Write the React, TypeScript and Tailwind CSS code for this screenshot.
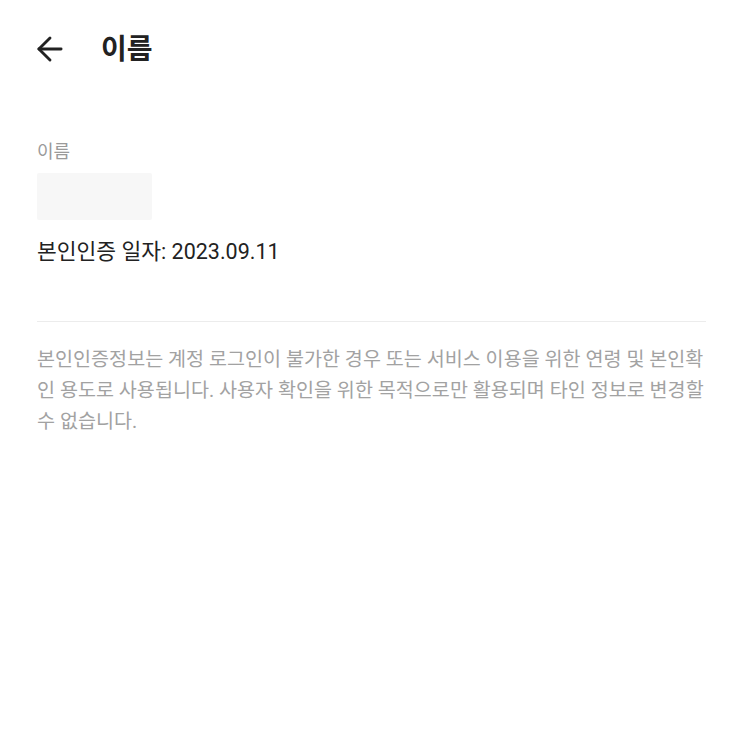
import { ArrowLeft } from 'lucide-react';

export default function App() {
  return (
    <div className="w-[743px] h-[747px] bg-white" style={{ fontFamily: '"Roboto", "Noto Sans CJK KR", sans-serif' }}>
      {/* Header */}
      <div className="flex items-center h-[100px] pl-[31px]">
        <ArrowLeft size={38} strokeWidth={1.8} className="text-[#222] mb-[2px]" />
        <h1 className="ml-[32px] text-[28px] font-bold text-[#222] leading-none">이름</h1>
      </div>

      {/* Name info */}
      <div className="px-[37px] pt-[40px]">
        <p className="text-[18px] text-[#9a9a9a] leading-[24px]">이름</p>
        <div className="mt-[9px] w-[115px] h-[47px] bg-[#f7f7f7] rounded-[2px]" />
        <p className="mt-[18px] text-[21.5px] text-[#222] leading-[28px]">본인인증 일자: 2023.09.11</p>
      </div>

      <div className="mx-[37px] mt-[55px] border-t border-[#ececec]" />

      <p className="pl-[37px] pr-[34px] mt-[22px] text-[19.6px] leading-[31px] text-[#a2a2a2] break-all">
        본인인증정보는 계정 로그인이 불가한 경우 또는 서비스 이용을 위한 연령 및 본인확인 용도로 사용됩니다. 사용자 확인을 위한 목적으로만 활용되며 타인 정보로 변경할 수 없습니다.
      </p>
    </div>
  );
}
